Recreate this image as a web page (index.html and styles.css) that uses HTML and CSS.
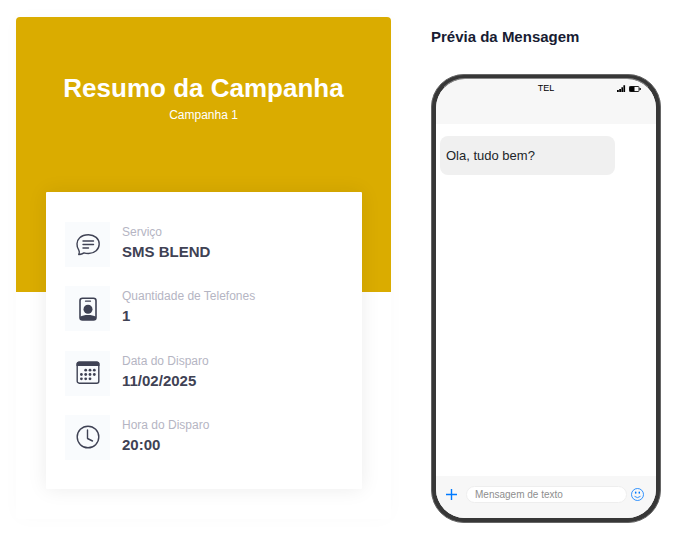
FILE: index.html
```html
<!DOCTYPE html>
<html lang="pt-BR">
<head>
<meta charset="utf-8">
<meta name="viewport" content="width=device-width, initial-scale=1">
<title>Resumo da Campanha</title>
<link rel="stylesheet" href="styles.css">
</head>
<body>
<main class="page">
  <section class="summary">
    <header class="hero">
      <h1 class="hero-title">Resumo da Campanha</h1>
      <p class="hero-subtitle">Campanha 1</p>
    </header>
    <dl class="details">
      <div class="item">
        <span class="item-icon">
          <svg viewBox="0 0 24 24" width="24" height="24" fill="none" stroke="currentColor" stroke-width="1.4" stroke-linecap="round" stroke-linejoin="round" aria-hidden="true">
            <path d="M2.800 17.200C.2 13.400.3 8 3.700 4.800C6.200 2.300 9.600 1.700 12.500 1.700C18.600 1.700 23.200 5.800 23.200 11S18.600 20.500 12.500 20.500C10.800 20.500 9.300 20.300 8 19.900C6.700 21 5.100 21.500 2.700 21.500C3.600 20 3.700 18.700 2.800 17.200Z"/>
            <path d="M7 8h10.500M7 11.500h10.500M7 15h5.500"/>
          </svg>
        </span>
        <div class="item-text"><dt>Serviço</dt><dd>SMS BLEND</dd></div>
      </div>
      <div class="item">
        <span class="item-icon">
          <svg viewBox="0 0 24 24" width="24" height="24" fill="currentColor" aria-hidden="true">
            <rect x="4" y="1.200" width="16" height="21.800" rx="2.500" fill="none" stroke="currentColor" stroke-width="1.600"/>
            <path d="M9.500 4.200h5" stroke="currentColor" stroke-width="1.200" stroke-linecap="round"/>
            <circle cx="12" cy="12.200" r="4.500"/>
            <path d="M4 19.800C6 18.500 9 18 12 18s6 .5 8 1.800V21a2 2 0 0 1-2 2H6a2 2 0 0 1-2-2Z"/>
          </svg>
        </span>
        <div class="item-text"><dt>Quantidade de Telefones</dt><dd>1</dd></div>
      </div>
      <div class="item">
        <span class="item-icon">
          <svg viewBox="0 0 24 24" width="24" height="24" fill="currentColor" aria-hidden="true">
            <rect x="1.200" y="1.200" width="21.600" height="21" rx="2" fill="none" stroke="currentColor" stroke-width="1.400"/>
            <path d="M.5 5V3A2.500 2.500 0 0 1 3 .5h18A2.500 2.500 0 0 1 23.500 3v2Z"/>
            <g>
              <circle cx="9.700" cy="9.200" r="1.400"/><circle cx="14" cy="9.200" r="1.400"/><circle cx="18.300" cy="9.200" r="1.400"/>
              <circle cx="5.400" cy="13.500" r="1.400"/><circle cx="9.700" cy="13.500" r="1.400"/><circle cx="14" cy="13.500" r="1.400"/><circle cx="18.300" cy="13.500" r="1.400"/>
              <circle cx="5.400" cy="17.800" r="1.400"/><circle cx="9.700" cy="17.800" r="1.400"/><circle cx="14" cy="17.800" r="1.400"/>
            </g>
          </svg>
        </span>
        <div class="item-text"><dt>Data do Disparo</dt><dd>11/02/2025</dd></div>
      </div>
      <div class="item">
        <span class="item-icon">
          <svg viewBox="0 0 24 24" width="24" height="24" fill="none" stroke="currentColor" stroke-width="1.400" stroke-linecap="round" stroke-linejoin="round" aria-hidden="true">
            <circle cx="12" cy="12" r="10.800"/>
            <path d="M11.500 5v8.500l5 2.500"/>
          </svg>
        </span>
        <div class="item-text"><dt>Hora do Disparo</dt><dd>20:00</dd></div>
      </div>
    </dl>
  </section>

  <section class="preview">
    <h2 class="preview-title">Prévia da Mensagem</h2>
    <div class="phone">
      <div class="screen">
        <div class="status">
          <span class="carrier">TEL</span>
          <svg class="signal" viewBox="0 0 24 8" width="24" height="8" aria-hidden="true">
            <path d="M0 5h1.800v2H0zM2.200 4h1.800v3H2.200zM4.400 2.300h1.600V7H4.400zM6.400.3h1.700V7H6.400z"/>
            <rect x="12.500" y="1.500" width="9.500" height="5" rx=".8" fill="none" stroke="#222" stroke-width="1"/>
            <path d="M12.500 1.500h5v5h-5zM22.500 3h1.300v2h-1.300z"/>
          </svg>
        </div>
        <div class="chat"><p class="bubble">Ola, tudo bem?</p></div>
        <form class="composer">
          <button class="composer-button" type="button" aria-label="Adicionar">
            <svg viewBox="0 0 13 13" width="13" height="13" fill="none" stroke="currentColor" stroke-width="1.400" aria-hidden="true"><path d="M6.500 1v11M1 6.500h11"/></svg>
          </button>
          <input class="composer-input" type="text" placeholder="Mensagem de texto" aria-label="Mensagem de texto">
          <button class="composer-button" type="button" aria-label="Emoji">
            <svg viewBox="0 0 13 13" width="13" height="13" fill="none" stroke="currentColor" stroke-width=".8" aria-hidden="true">
              <circle cx="6.500" cy="6.500" r="6"/>
              <path d="M3.500 8.300Q6.500 11 9.500 8.300"/>
              <ellipse cx="4.700" cy="4.700" rx=".8" ry="1.100" fill="currentColor" stroke="none"/><ellipse cx="8.300" cy="4.700" rx=".8" ry="1.100" fill="currentColor" stroke="none"/>
            </svg>
          </button>
        </form>
      </div>
    </div>
  </section>
</main>
</body>
</html>
```
FILE: styles.css
```css
* {
  box-sizing: border-box;
}

body,
h1,
h2,
p,
dl,
dd {
  margin: 0;
}

body {
  background: #fff;
  color: #181c32;
  font-family: "Liberation Sans", Arial, sans-serif;
}

.page {
  display: grid;
  grid-template-columns: 375fr 230fr;
  gap: 40px;
  align-items: start;
  padding: 17px 24px 17px 16px;
}

.summary {
  padding-bottom: 30px;
  border-radius: 4px;
  box-shadow: 0 0 20px rgba(76, 87, 125, 0.02);
}

.hero {
  height: 275px;
  padding-top: 54px;
  border-radius: 4px 4px 0 0;
  background: #daac00;
  color: #fff;
  text-align: center;
}

.hero-title {
  font-size: 26px;
  line-height: 34px;
}

.hero-subtitle {
  font-size: 12px;
  line-height: 20px;
}

.details {
  display: grid;
  align-content: space-between;
  min-height: 297px;
  margin: -100px 29px 0 30px;
  padding: 30px 19px 29px;
  border-radius: 1px;
  background: #fff;
  box-shadow: 0 0 20px rgba(0, 0, 0, 0.08);
}

.item {
  display: flex;
  gap: 12px;
}

.item-icon {
  display: grid;
  place-items: center;
  width: 45px;
  height: 45px;
  background: #f9fbfd;
  color: #3f4254;
}

.item-text {
  color: #3f4254;
}

.item-text dt {
  color: #b5b5c3;
  font-size: 12px;
  line-height: 20px;
}

.item-text dd {
  font-size: 15px;
  font-weight: bold;
  line-height: 20px;
}

.preview-title {
  margin-bottom: 27px;
  padding-top: 10px;
  font-size: 15px;
  line-height: 20px;
}

.phone {
  position: relative;
  padding: 4px;
  border: 1px solid #666;
  border-radius: 33px;
  background: #373737;
}

.phone::after {
  content: "";
  position: absolute;
  inset: 3px;
  border: 1px solid transparent;
  border-top-color: #888;
  border-radius: 30px;
  pointer-events: none;
}

.screen {
  display: flex;
  flex-direction: column;
  min-height: 439px;
  overflow: hidden;
  border-radius: 29px;
  background: #fff;
}

.status {
  display: grid;
  grid-template-columns: 1fr auto 1fr;
  align-items: start;
  height: 45px;
  padding: 4px 15px 0;
  background: #f7f7f7;
}

.carrier {
  grid-column: 2;
  color: #000;
  font-size: 9px;
  line-height: 10px;
}

.signal {
  justify-self: end;
  margin-top: 2px;
}

.chat {
  flex: 1;
  padding: 12px 41px 12px 4px;
}

.bubble {
  padding: 10px 6px 9px;
  border-radius: 8px;
  background: #f0f0f0;
  color: #212529;
  font-size: 13px;
  line-height: 20px;
}

.composer {
  display: flex;
  gap: 4px;
  align-items: flex-start;
  height: 42px;
  padding: 10px 12px 0 9px;
  background: #f7f7f7;
}

.composer-button {
  display: grid;
  place-items: center;
  flex: none;
  height: 17px;
  padding: 0;
  border: 0;
  background: none;
  color: #007aff;
}

.composer-input {
  flex: 1;
  min-width: 0;
  height: 17px;
  margin-left: 4px;
  padding: 0 8px;
  border: 1px solid #eee;
  border-radius: 9px;
  background: #fff;
  font: 10px "Liberation Sans", Arial, sans-serif;
}

.composer-input::placeholder {
  color: #8e8e8e;
}
```
